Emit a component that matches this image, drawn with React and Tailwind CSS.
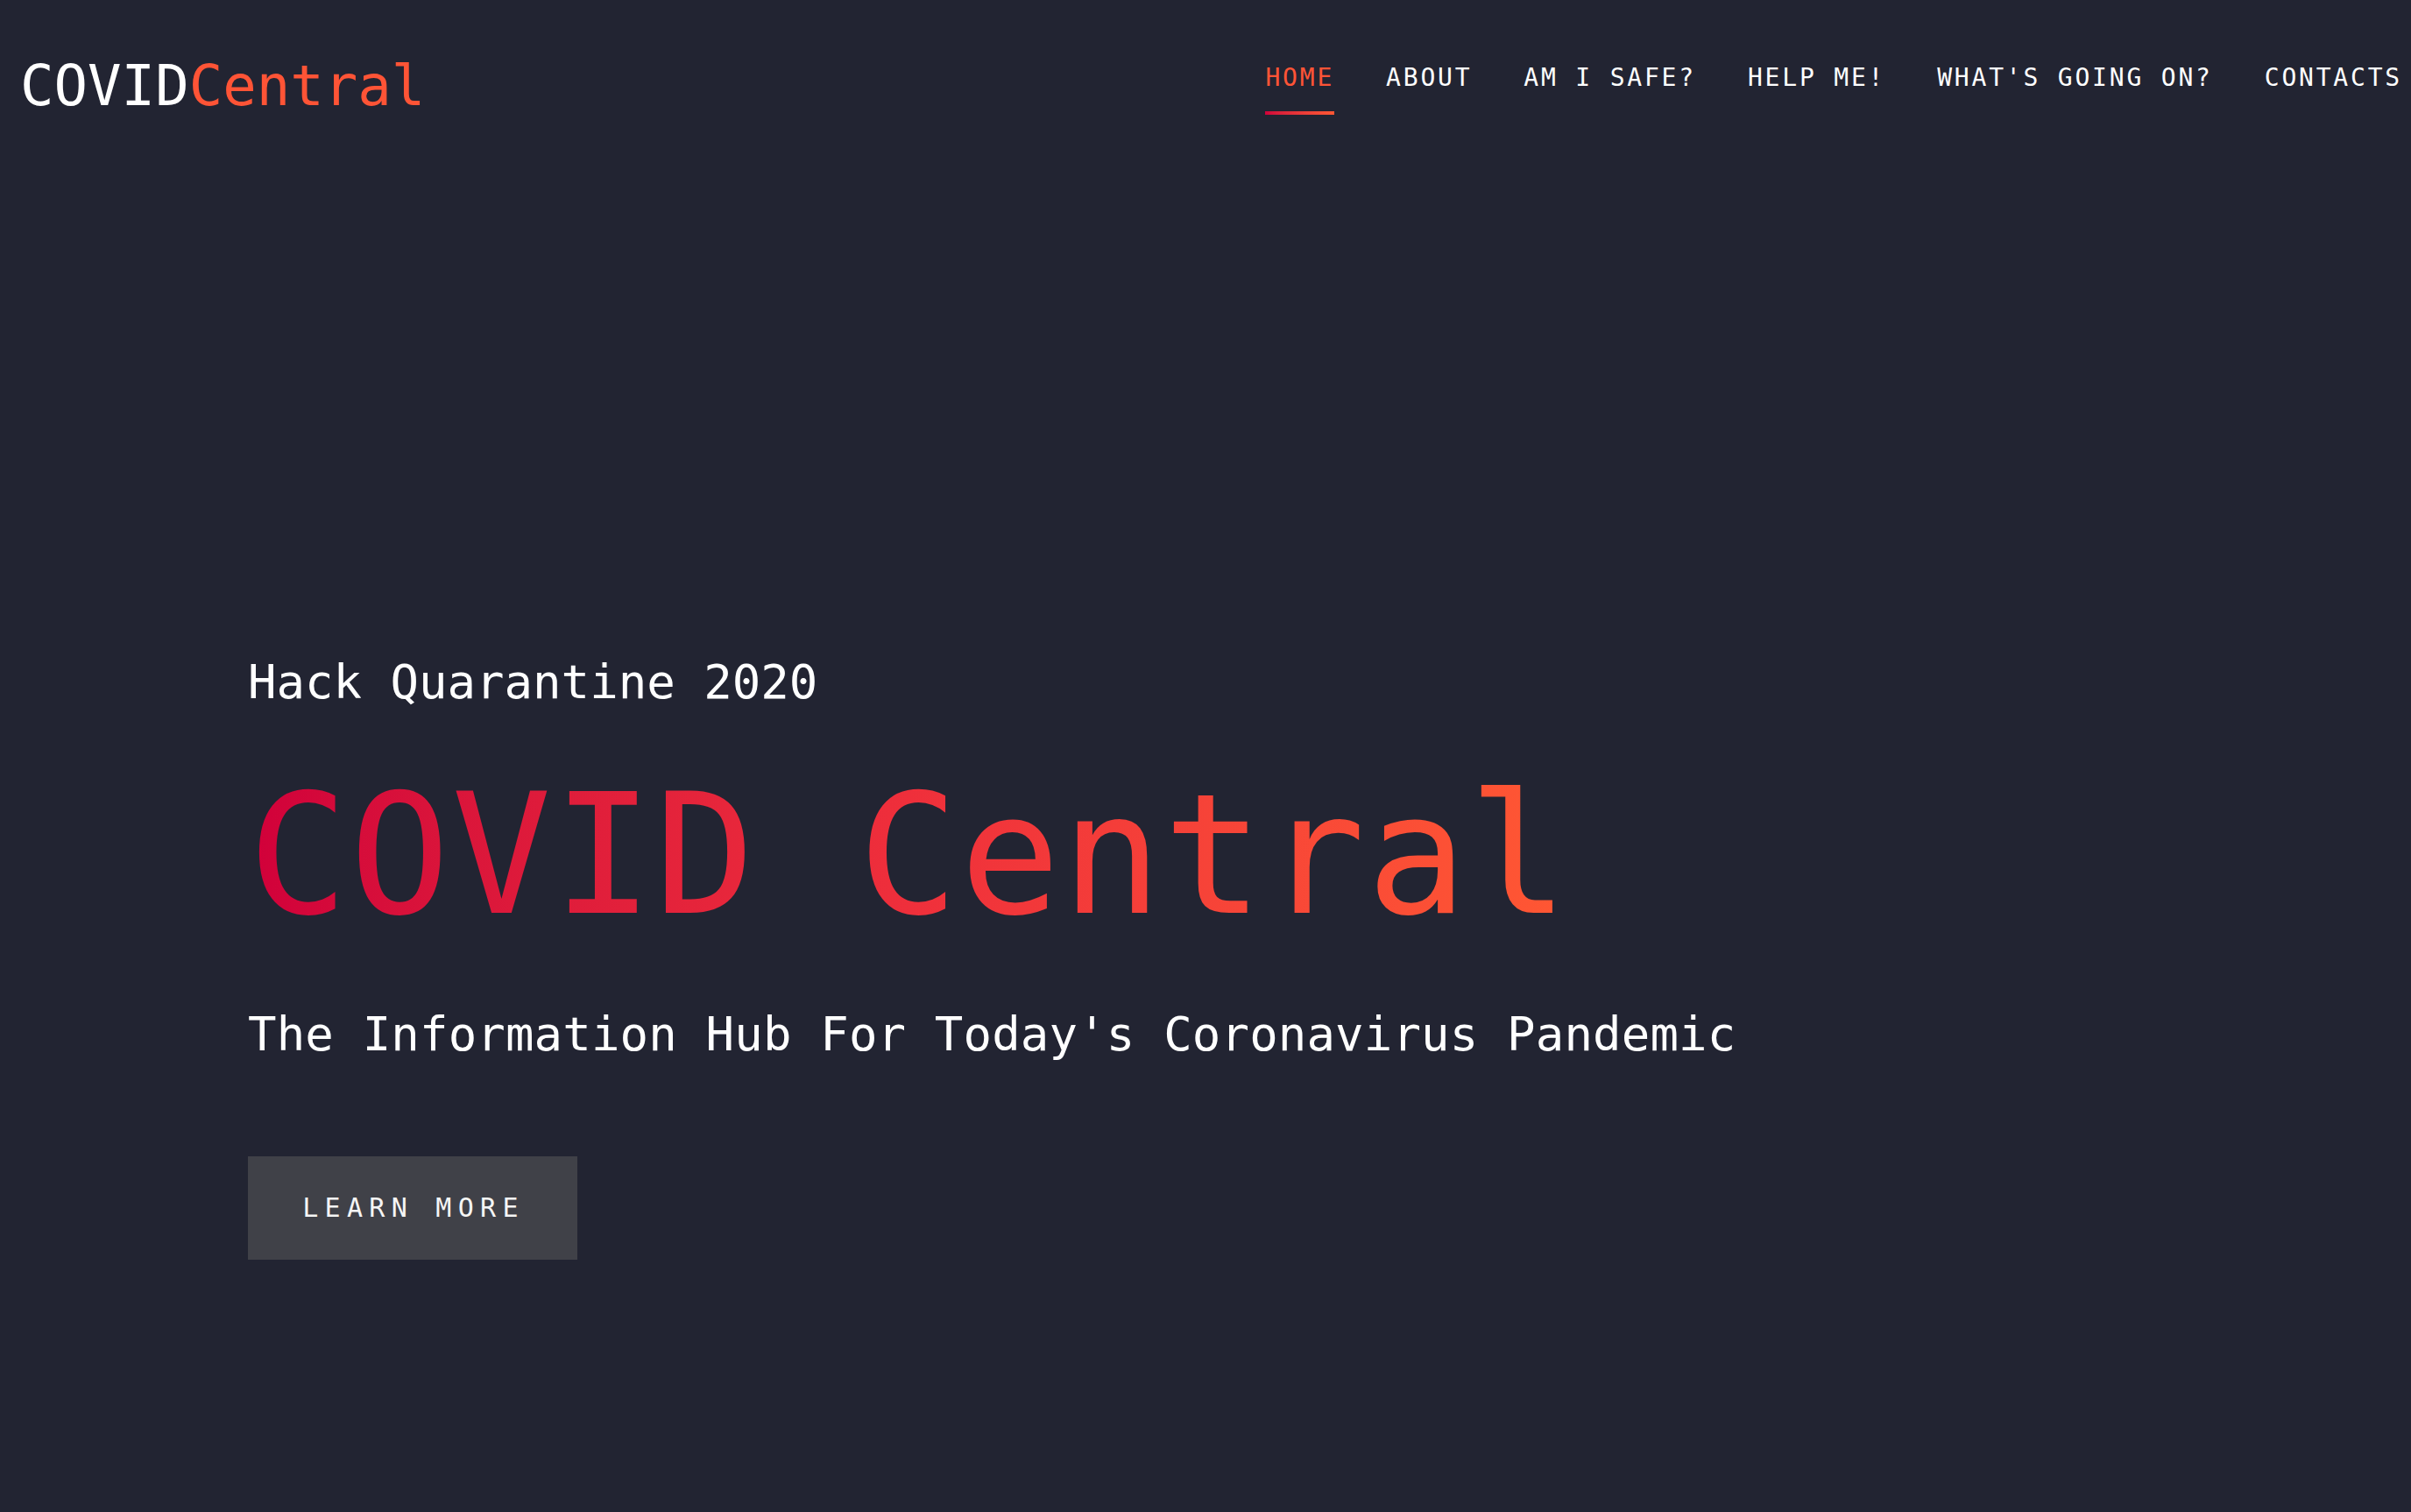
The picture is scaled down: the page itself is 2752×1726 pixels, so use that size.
import React from 'react';

const navItems = ['HOME', 'ABOUT', 'AM I SAFE?', 'HELP ME!', "WHAT'S GOING ON?", 'CONTACTS'];

export default function App() {
  return (
    <div className="min-h-screen w-full bg-[#222432] text-white font-['DejaVu_Sans_Mono',monospace]">
      <header className="flex items-start justify-between pl-[23px] pr-[10px] pt-[66px]">
        <a href="#" className="text-[64px] leading-none whitespace-pre">
          <span className="text-white">COVID</span>
          <span className="text-[#ff5436]">Central</span>
        </a>
        <nav className="mt-[9px] flex items-start gap-[59px]">
          {navItems.map((item, i) => (
            <a key={item} href="#" className="flex flex-col">
              <span
                className={
                  'text-[28px] leading-none tracking-[2.8px] whitespace-pre ' +
                  (i === 0 ? 'text-[#ff5436]' : 'text-white')
                }
              >
                {item}
              </span>
              {i === 0 ? (
                <span className="mt-[24px] h-[4px] w-full bg-gradient-to-r from-[#d1003a] to-[#ff5733]" />
              ) : (
                <span className="mt-[24px] h-[4px] w-full" />
              )}
            </a>
          ))}
        </nav>
      </header>

      <main className="pl-[283px] pt-[621px]">
        <p className="text-[54px] leading-none whitespace-pre">Hack Quarantine 2020</p>
        <h1 className="mt-[76px] inline-block text-[190px] leading-none tracking-[1.7px] whitespace-pre bg-gradient-to-r from-[#d1003a] via-[#ef2f3b] to-[#ff5733] bg-clip-text text-transparent">
          COVID Central
        </h1>
        <p className="mt-[82px] text-[54px] leading-none tracking-[0.15px] whitespace-pre">
          The Information Hub For Today's Coronavirus Pandemic
        </p>
        <button className="mt-[112px] flex h-[118px] w-[376px] items-center justify-center bg-[#404148] pl-[2px] text-[30px] leading-none tracking-[7.3px] text-[#f5f5f5]">
          LEARN MORE
        </button>
      </main>
    </div>
  );
}
